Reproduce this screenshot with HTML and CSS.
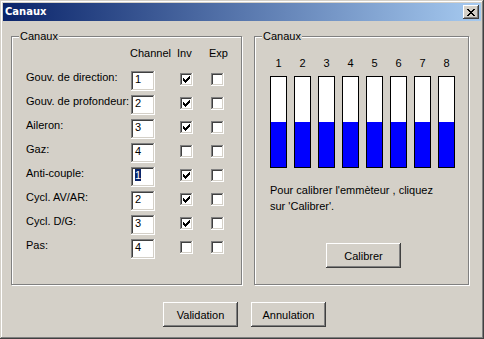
FILE: index.html
```html
<!DOCTYPE html>
<html lang="fr">
<head>
    <meta charset="UTF-8">
    <meta name="viewport" content="width=device-width, initial-scale=1.0">
    <title>Canaux</title>
    <link rel="stylesheet" href="styles.css">
</head>
<body>
    <div class="window">
        <div class="titlebar">
            <span class="title">Canaux</span>
            <button class="close" title="Fermer">
                <svg width="8" height="7" viewBox="0 0 8 7" shape-rendering="crispEdges">
                    <path fill="#000" d="M0 0h2v1H0zM6 0h2v1H6zM1 1h2v1H1zM5 1h2v1H5zM2 2h4v1H2zM3 3h2v1H3zM2 4h4v1H2zM1 5h2v1H1zM5 5h2v1H5zM0 6h2v1H0zM6 6h2v1H6z"/>
                </svg>
            </button>
        </div>

        <div class="client">
            <div class="groups">
                <fieldset class="group group-left">
                    <legend>Canaux</legend>
                    <div class="channels">
                        <span></span>
                        <span class="head head-channel">Channel</span>
                        <span class="head head-inv">Inv</span>
                        <span class="head head-exp">Exp</span>

                        <label>Gouv. de direction:</label>
                        <span class="edit">1</span>
                        <span class="chk on"><svg width="7" height="7" viewBox="0 0 7 7" shape-rendering="crispEdges"><path d="M0 2h1v3H0zM1 3h1v3H1zM2 4h1v3H2zM3 3h1v3H3zM4 2h1v3H4zM5 1h1v3H5zM6 0h1v3H6z"/></svg></span>
                        <span class="chk"></span>

                        <label>Gouv. de profondeur:</label>
                        <span class="edit">2</span>
                        <span class="chk on"><svg width="7" height="7" viewBox="0 0 7 7" shape-rendering="crispEdges"><path d="M0 2h1v3H0zM1 3h1v3H1zM2 4h1v3H2zM3 3h1v3H3zM4 2h1v3H4zM5 1h1v3H5zM6 0h1v3H6z"/></svg></span>
                        <span class="chk"></span>

                        <label>Aileron:</label>
                        <span class="edit">3</span>
                        <span class="chk on"><svg width="7" height="7" viewBox="0 0 7 7" shape-rendering="crispEdges"><path d="M0 2h1v3H0zM1 3h1v3H1zM2 4h1v3H2zM3 3h1v3H3zM4 2h1v3H4zM5 1h1v3H5zM6 0h1v3H6z"/></svg></span>
                        <span class="chk"></span>

                        <label>Gaz:</label>
                        <span class="edit">4</span>
                        <span class="chk"></span>
                        <span class="chk"></span>

                        <label>Anti-couple:</label>
                        <span class="edit"><span class="sel">1</span></span>
                        <span class="chk on"><svg width="7" height="7" viewBox="0 0 7 7" shape-rendering="crispEdges"><path d="M0 2h1v3H0zM1 3h1v3H1zM2 4h1v3H2zM3 3h1v3H3zM4 2h1v3H4zM5 1h1v3H5zM6 0h1v3H6z"/></svg></span>
                        <span class="chk"></span>

                        <label>Cycl. AV/AR:</label>
                        <span class="edit">2</span>
                        <span class="chk on"><svg width="7" height="7" viewBox="0 0 7 7" shape-rendering="crispEdges"><path d="M0 2h1v3H0zM1 3h1v3H1zM2 4h1v3H2zM3 3h1v3H3zM4 2h1v3H4zM5 1h1v3H5zM6 0h1v3H6z"/></svg></span>
                        <span class="chk"></span>

                        <label>Cycl. D/G:</label>
                        <span class="edit">3</span>
                        <span class="chk on"><svg width="7" height="7" viewBox="0 0 7 7" shape-rendering="crispEdges"><path d="M0 2h1v3H0zM1 3h1v3H1zM2 4h1v3H2zM3 3h1v3H3zM4 2h1v3H4zM5 1h1v3H5zM6 0h1v3H6z"/></svg></span>
                        <span class="chk"></span>

                        <label>Pas:</label>
                        <span class="edit">4</span>
                        <span class="chk"></span>
                        <span class="chk"></span>
                    </div>
                </fieldset>

                <fieldset class="group group-right">
                    <legend>Canaux</legend>
                    <div class="meters">
                        <div class="meter"><span>1</span><div class="bar"><div class="fill" style="height:50%"></div></div></div>
                        <div class="meter"><span>2</span><div class="bar"><div class="fill" style="height:50%"></div></div></div>
                        <div class="meter"><span>3</span><div class="bar"><div class="fill" style="height:50%"></div></div></div>
                        <div class="meter"><span>4</span><div class="bar"><div class="fill" style="height:50%"></div></div></div>
                        <div class="meter"><span>5</span><div class="bar"><div class="fill" style="height:50%"></div></div></div>
                        <div class="meter"><span>6</span><div class="bar"><div class="fill" style="height:50%"></div></div></div>
                        <div class="meter"><span>7</span><div class="bar"><div class="fill" style="height:50%"></div></div></div>
                        <div class="meter"><span>8</span><div class="bar"><div class="fill" style="height:50%"></div></div></div>
                    </div>
                    <p class="hint">Pour calibrer l'emmèteur , cliquez<br>sur 'Calibrer'.</p>
                    <button class="btn btn-calibrate">Calibrer</button>
                </fieldset>
            </div>

            <div class="actions">
                <button class="btn">Validation</button>
                <button class="btn">Annulation</button>
            </div>
        </div>
    </div>
</body>
</html>
```

FILE: styles.css
```css
html, body {
    margin: 0;
    padding: 0;
    background: #d4d0c8;
}
body {
    font-family: "Liberation Sans", Arial, sans-serif;
    font-size: 11px;
    line-height: 13px;
    color: #000;
}
.window {
    width: 484px;
    height: 339px;
    box-sizing: border-box;
    padding: 3px;
    background: #d4d0c8;
    box-shadow: inset -1px -1px #404040, inset 1px 1px #d4d0c8, inset -2px -2px #808080, inset 2px 2px #fff;
}
.titlebar {
    height: 18px;
    margin-bottom: 1px;
    display: flex;
    align-items: center;
    justify-content: space-between;
    background: linear-gradient(to right, #0a246a, #a6caf0);
}
.title {
    padding-left: 2px;
    font-family: "DejaVu Sans", Tahoma, sans-serif;
    font-weight: bold;
    font-size: 10px;
    line-height: 18px;
    color: #fff;
}
.close {
    width: 16px;
    height: 14px;
    margin-right: 2px;
    padding: 0;
    border: 0;
    display: flex;
    align-items: center;
    justify-content: center;
    background: #d4d0c8;
    box-shadow: inset -1px -1px #404040, inset 1px 1px #fff, inset -2px -2px #808080, inset 2px 2px #d4d0c8;
}
.client {
    padding: 8px 8px 0;
}
.groups {
    display: flex;
    gap: 12px;
    height: 255px;
}
.group {
    margin: 0;
    padding: 0;
    min-width: 0;
    border: 1px solid #808080;
    box-shadow: inset 1px 1px #fff, 1px 1px #fff;
}
.group legend {
    margin-left: 7px;
    padding: 0 1px;
    line-height: 13px;
    background: #d4d0c8;
}
.group-left {
    width: 231px;
    box-sizing: border-box;
}
.group-right {
    width: 215px;
    box-sizing: border-box;
}

/* channel table */
.channels {
    display: grid;
    grid-template-columns: 105px 49px 31px 13px;
    grid-auto-rows: 20px;
    row-gap: 4px;
    padding: 4px 0 0 14px;
}
.head {
    white-space: nowrap;
}
.head-channel {
    margin-left: -1px;
}
.head-inv {
    margin-left: -3px;
}
.head-exp {
    margin-left: -2px;
}
.channels label {
    white-space: nowrap;
}
.edit {
    width: 24px;
    height: 20px;
    box-sizing: border-box;
    padding: 2px 2px 1px 4px;
    background: #fff;
    box-shadow: inset -1px -1px #fff, inset 1px 1px #808080, inset -2px -2px #d4d0c8, inset 2px 2px #404040;
}
.sel {
    background: #0a246a;
    color: #fff;
}
.chk {
    width: 13px;
    height: 13px;
    margin-top: 2px;
    box-sizing: border-box;
    padding: 3px;
    background: #fff;
    box-shadow: inset -1px -1px #fff, inset 1px 1px #808080, inset -2px -2px #d4d0c8, inset 2px 2px #404040;
}
.chk svg {
    display: block;
}

/* meters */
.meters {
    display: flex;
    gap: 7px;
    margin-top: 14px;
    padding-left: 15px;
}
.meter {
    width: 17px;
    display: flex;
    flex-direction: column;
    align-items: center;
}
.bar {
    width: 17px;
    height: 92px;
    margin-top: 6px;
    box-sizing: border-box;
    border: 1px solid #000;
    background: #fff;
    display: flex;
    flex-direction: column;
    justify-content: flex-end;
}
.fill {
    background: #0000ff;
}
.hint {
    margin: 14px 0 0 15px;
    line-height: 16px;
}

/* buttons */
.btn {
    width: 75px;
    height: 25px;
    padding: 0;
    border: 0;
    background: #d4d0c8;
    font-family: inherit;
    font-size: 11px;
    color: #000;
    box-shadow: inset -1px -1px #404040, inset 1px 1px #fff, inset -2px -2px #808080, inset 2px 2px #d4d0c8;
}
.btn-calibrate {
    margin: 29px 0 0 71px;
}
.actions {
    display: flex;
    gap: 13px;
    margin-top: 17px;
    padding-left: 152px;
}
```
